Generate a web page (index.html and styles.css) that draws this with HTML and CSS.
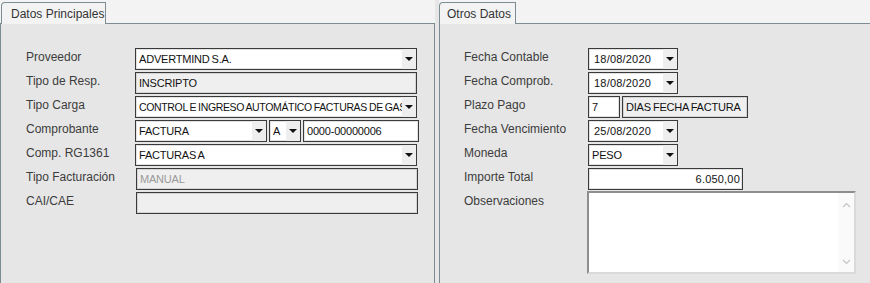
FILE: index.html
```html
<!DOCTYPE html>
<html>
<head>
<meta charset="utf-8">
<link rel="stylesheet" href="styles.css">
</head>
<body>
<div class="screen">
  <section class="panel panel-left">
    <div class="tabbar"><div class="tab">Datos Principales</div></div>
    <div class="body">
      <div class="row"><div class="lbl">Proveedor</div><div class="box combo w282"><span class="val">ADVERTMIND S.A.</span><span class="btn"><i></i></span></div></div>
      <div class="row"><div class="lbl">Tipo de Resp.</div><div class="box ro w282"><span class="val">INSCRIPTO</span></div></div>
      <div class="row"><div class="lbl">Tipo Carga</div><div class="box combo w282"><span class="val tight">CONTROL E INGRESO AUTOMÁTICO FACTURAS DE GASTOS</span><span class="btn"><i></i></span></div></div>
      <div class="row"><div class="lbl">Comprobante</div>
        <div class="group">
          <div class="box combo w132"><span class="val">FACTURA</span><span class="btn"><i></i></span></div>
          <div class="box combo w32"><span class="val">A</span><span class="btn"><i></i></span></div>
          <div class="box w116"><span class="val">0000-00000006</span></div>
        </div>
      </div>
      <div class="row"><div class="lbl">Comp. RG1361</div><div class="box combo w282"><span class="val">FACTURAS A</span><span class="btn"><i></i></span></div></div>
      <div class="row"><div class="lbl">Tipo Facturación</div><div class="box ro dis w282 shift"><span class="val">MANUAL</span></div></div>
      <div class="row"><div class="lbl">CAI/CAE</div><div class="box ro w282 shift"><span class="val"></span></div></div>
    </div>
  </section>
  <section class="panel panel-right">
    <div class="tabbar"><div class="tab">Otros Datos</div></div>
    <div class="body body-right">
      <div class="row"><div class="lbl">Fecha Contable</div><div class="box combo date w90"><span class="val">18/08/2020</span><span class="btn"><i></i></span></div></div>
      <div class="row"><div class="lbl">Fecha Comprob.</div><div class="box combo date w90"><span class="val">18/08/2020</span><span class="btn"><i></i></span></div></div>
      <div class="row"><div class="lbl">Plazo Pago</div>
        <div class="group">
          <div class="box w32"><span class="val">7</span></div>
          <div class="box ro w126"><span class="val">DIAS FECHA FACTURA</span></div>
        </div>
      </div>
      <div class="row"><div class="lbl">Fecha Vencimiento</div><div class="box combo date w90"><span class="val">25/08/2020</span><span class="btn"><i></i></span></div></div>
      <div class="row"><div class="lbl">Moneda</div><div class="box combo w90"><span class="val">PESO</span><span class="btn"><i></i></span></div></div>
      <div class="row"><div class="lbl">Importe Total</div><div class="box num w155"><span class="val">6.050,00</span></div></div>
      <div class="row row-top"><div class="lbl">Observaciones</div>
        <div class="textarea">
          <div class="ta-text"></div>
          <div class="ta-scroll">
            <svg width="9" height="6" viewBox="0 0 9 6"><path d="M1 5 L4.5 1.5 L8 5" fill="none" stroke="#c4c4c4" stroke-width="1.2"/></svg>
            <svg width="9" height="6" viewBox="0 0 9 6"><path d="M1 1 L4.5 4.5 L8 1" fill="none" stroke="#c4c4c4" stroke-width="1.2"/></svg>
          </div>
        </div>
      </div>
    </div>
  </section>
</div>
</body>
</html>
```
FILE: styles.css
```css
* { box-sizing: border-box; }
html, body { margin: 0; padding: 0; }
body {
  width: 870px;
  height: 283px;
  overflow: hidden;
  background: #e6e6e6;
  font-family: "Liberation Sans", Arial, sans-serif;
  font-size: 11px;
}
.screen {
  display: flex;
  height: 283px;
  background: #e6e6e6;
}
.panel {
  display: flex;
  flex-direction: column;
  height: 283px;
}
.panel-left {
  width: 435px;
  background: #f3f3f3;
  padding-left: 1px;
}
.panel-right {
  flex: 1;
  margin-left: 4px;
  background: #f3f3f3;
}
.tabbar {
  height: 23px;
  display: flex;
  align-items: flex-end;
  padding-left: 1px;
  background: #f3f3f3;
}
.panel-right .tabbar { padding-left: 0; }
.tab {
  border: 1px solid #7d8c93;
  border-bottom: none;
  border-top-left-radius: 4px;
  background: #f3f3f3;
  color: #333;
  padding: 4px 0 0 9px;
  font-size: 12px;
  white-space: nowrap;
  position: relative;
  z-index: 1;
  margin-bottom: -1px;
  height: 22px;
}
.panel-left .tab { width: 105px; margin-left: -1px; }
.panel-right .tab { width: 77px; padding-left: 7px; }
.body {
  flex: 1;
  background: #e6e6e6;
  border: 1px solid #7d8c93;
  border-bottom: none;
  padding: 24px 0 0 25px;
  display: flex;
  flex-direction: column;
  gap: 2px;
}
.panel-left .body { margin-left: -1px; }
.panel-right .body { border-right: none; padding-left: 24px; }
.row {
  display: flex;
  align-items: center;
  height: 22px;
}
.row-top { align-items: flex-start; height: auto; }
.lbl {
  width: 109px;
  color: #3c3c3c;
  font-size: 12px;
  padding-bottom: 4px;
  white-space: nowrap;
}
.body-right .lbl { width: 124px; }
.row-top .lbl { padding-top: 2px; }
.group { display: flex; gap: 2px; }
.box {
  height: 22px;
  border: 1px solid #3a3a3a;
  box-shadow: inset 0 0 0 1px rgba(60,60,60,0.15);
  background: #ffffff;
  display: flex;
  align-items: center;
  overflow: hidden;
  color: #111;
  font-size: 11px;
}
.box .val {
  flex: 1;
  padding-left: 3px;
  white-space: nowrap;
  overflow: hidden;
  word-spacing: -0.8px;
  letter-spacing: -0.2px;
}
.box .val.tight { font-size: 10.5px; letter-spacing: -0.35px; word-spacing: -0.6px; }
.box.ro { background: #efefef; }
.box.dis .val { color: #9a9a9a; }
.box.shift { margin-left: 1px; }
.box.date .val { padding-left: 5px; letter-spacing: 0.2px; }
.box.num .val { text-align: right; padding-right: 2px; letter-spacing: 0.2px; }
.btn {
  width: 14px;
  height: 20px;
  background: #eeeeee;
  display: flex;
  align-items: center;
  justify-content: center;
  flex: none;
}
.btn i {
  display: block;
  width: 0;
  height: 0;
  border-left: 4px solid transparent;
  border-right: 4px solid transparent;
  border-top: 4px solid #111;
}
.w282 { width: 282px; }
.w132 { width: 132px; }
.w32 { width: 32px; }
.w116 { width: 116px; }
.w90 { width: 90px; }
.w126 { width: 126px; }
.w155 { width: 155px; }
.textarea {
  width: 269px;
  height: 83px;
  margin-left: -1px;
  margin-top: -1px;
  border-top: 2px solid #8e8e8e;
  border-left: 2px solid #8e8e8e;
  border-right: 2px solid #dadada;
  border-bottom: 2px solid #dadada;
  background: #fff;
  display: flex;
}
.ta-text { flex: 1; }
.ta-scroll {
  width: 16px;
  background: #fafafa;
  display: flex;
  flex-direction: column;
  justify-content: space-between;
  align-items: center;
  padding: 9px 0 7px;
}
```
